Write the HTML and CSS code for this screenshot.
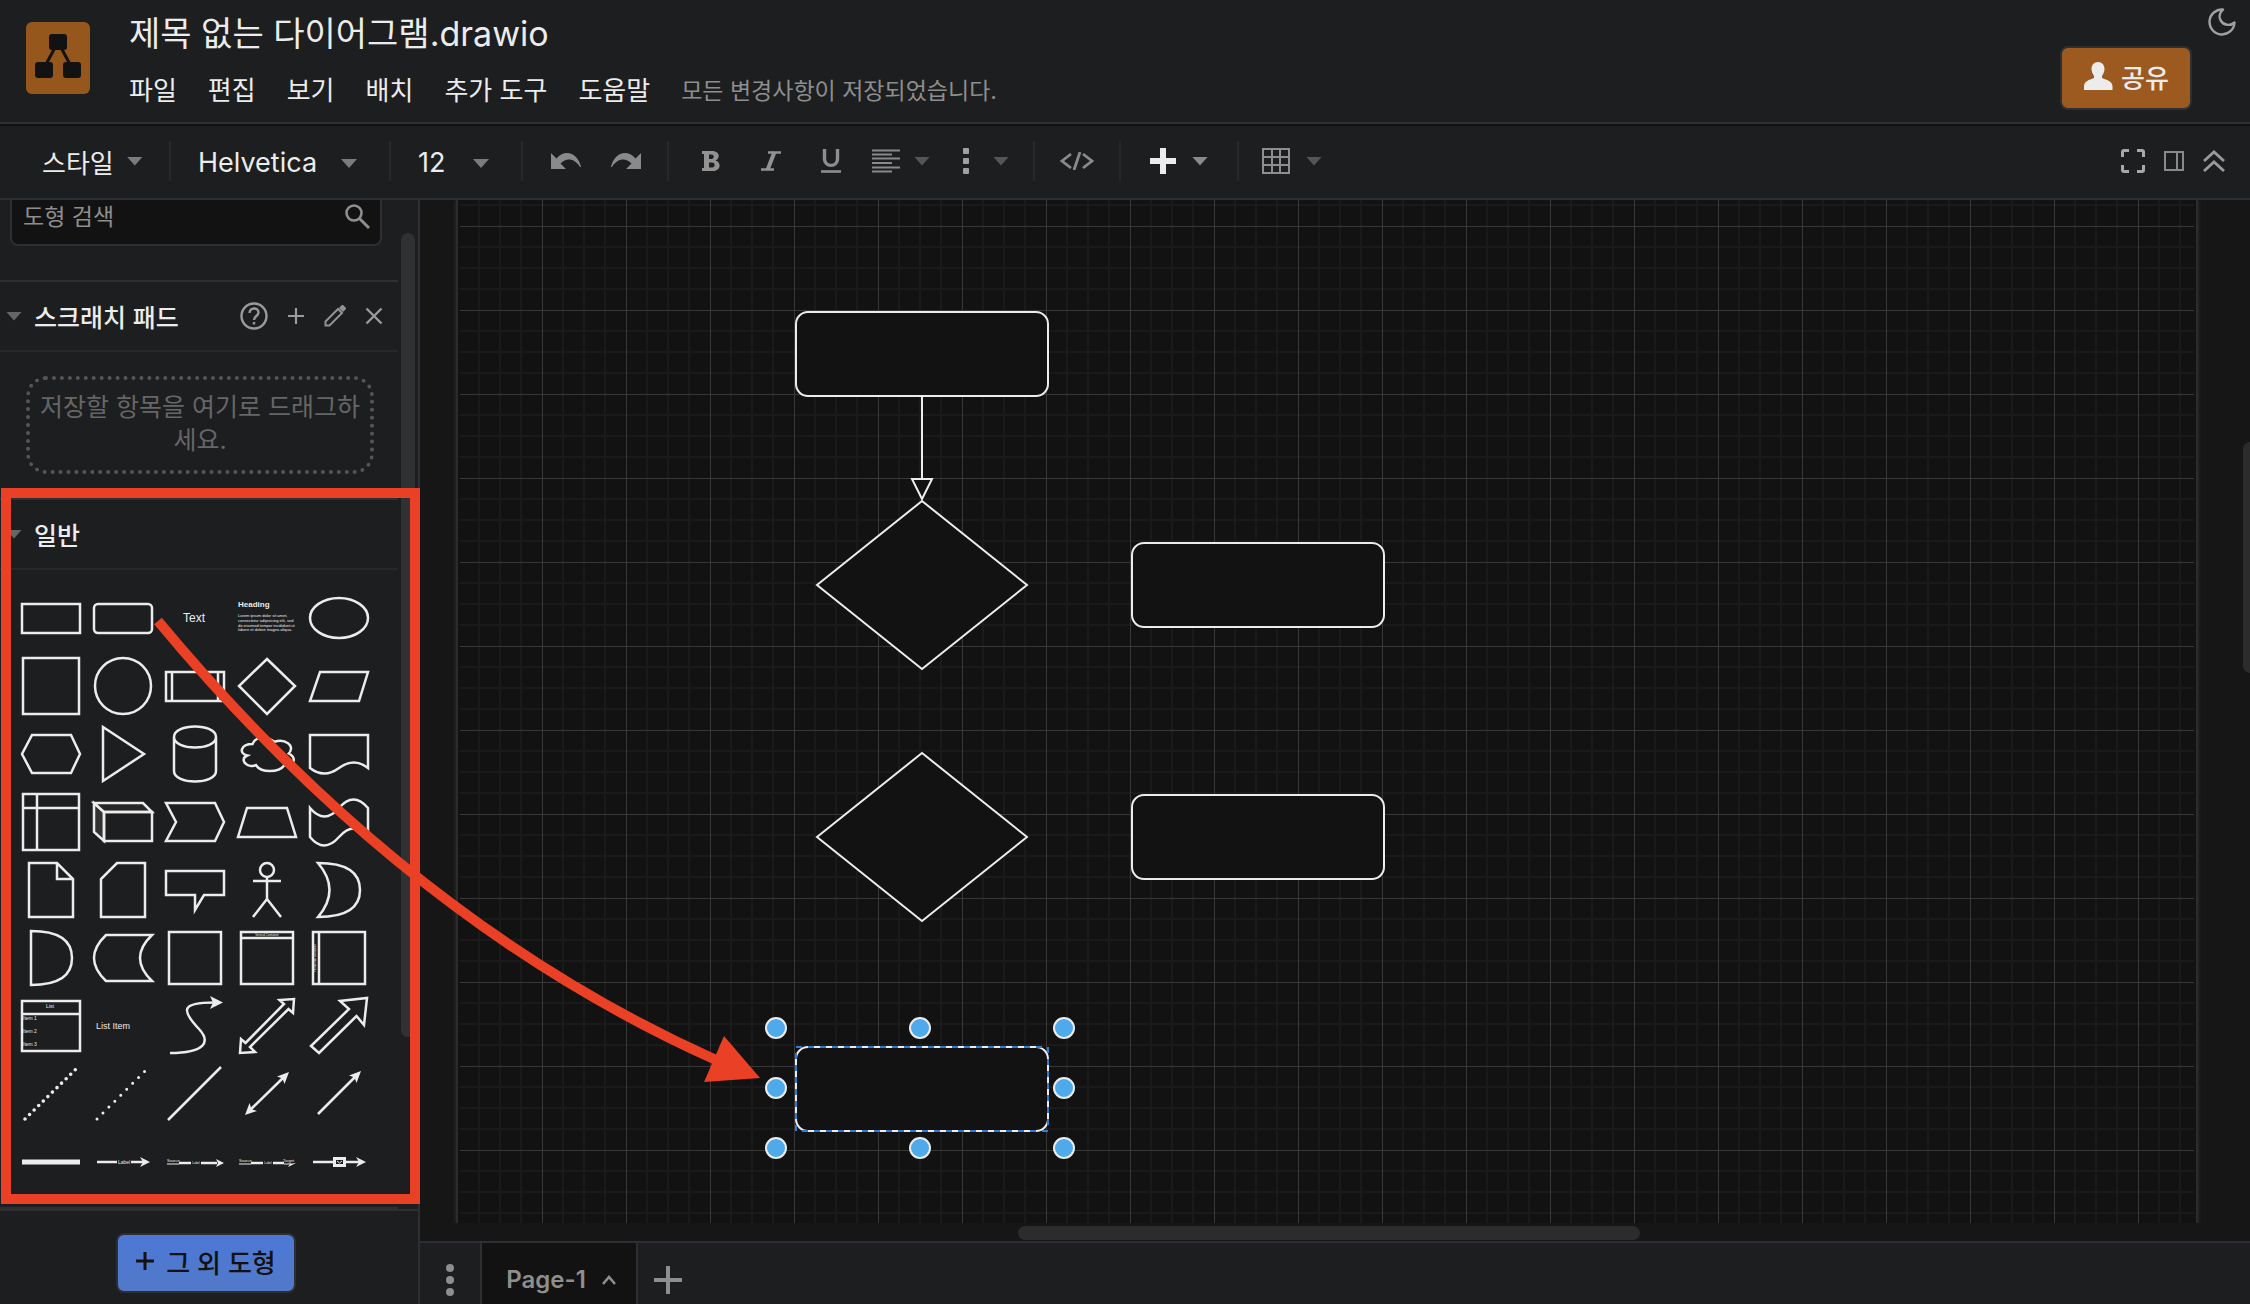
FILE: index.html
```html
<!DOCTYPE html>
<html lang="ko">
<head>
<meta charset="utf-8">
<title>제목 없는 다이어그램.drawio</title>
<link rel="stylesheet" href="styles.css">
</head>
<body>
<div class="app">
  <header class="header">
    <svg class="logo" viewBox="0 0 64 72" aria-hidden="true">
      <rect width="64" height="72" rx="6" fill="#96571d"/>
      <path d="M32 20L18 46M32 20L46 46" stroke="#121212" stroke-width="3"/>
      <rect x="23" y="12" width="18" height="16" rx="3" fill="#121212"/>
      <rect x="9" y="40" width="18" height="16" rx="3" fill="#121212"/>
      <rect x="37" y="40" width="18" height="16" rx="3" fill="#121212"/>
    </svg>
    <div class="heading">
      <h1 class="title">제목 없는 다이어그램.drawio</h1>
      <nav class="menubar">
        <button class="menu">파일</button>
        <button class="menu">편집</button>
        <button class="menu">보기</button>
        <button class="menu">배치</button>
        <button class="menu">추가 도구</button>
        <button class="menu">도움말</button>
        <span class="status">모든 변경사항이 저장되었습니다.</span>
      </nav>
    </div>
    <div class="header-actions">
      <button class="icon-button theme" aria-label="테마">
        <svg width="28" height="28" viewBox="0 0 28 28" fill="none" stroke="#a0a0a3" stroke-width="2.4" stroke-linejoin="round"><path d="M15 1.5A12.5 12.5 0 1 0 26.500 14.500C22 18.500 15.500 17 13 13C10.500 9 11.500 4.500 15 1.500Z"/></svg>
      </button>
      <button class="share">
        <svg width="30" height="30" viewBox="0 0 30 30" aria-hidden="true"><path d="M15 0C19 0 21.500 3 21.500 7C21.500 10 20 12 19 14V16C24 18 29 19 29.500 24V28H1V24C1.500 19 6 18 11 16V14C10 12 8.500 10 8.500 7C8.500 3 11 0 15 0Z" fill="#ececec"/></svg>
        <span>공유</span>
      </button>
    </div>
  </header>

  <div class="toolbar">
    <div class="group style-group"><button class="style-button">스타일 <i class="caret"></i></button></div>
    <div class="group picker font-picker">
      <select aria-label="글꼴"><option>Helvetica</option></select><i class="caret"></i>
    </div>
    <div class="group picker size-picker">
      <select aria-label="글꼴 크기"><option>12</option></select><i class="caret"></i>
    </div>
    <div class="group history">
      <button class="tool" aria-label="실행 취소"><svg width="32" height="22" viewBox="0 0 32 22"><path d="M1 3V19H16L10.500 13.500C17 7 25 9 30 17H31C29 5 16-3 6.500 8.500Z" fill="#8a8a8a"/></svg></button>
      <button class="tool" aria-label="다시 실행"><svg width="32" height="22" viewBox="0 0 32 22"><path d="M31 3V19H16L21.500 13.500C15 7 7 9 2 17H1C3 5 16-3 25.500 8.500Z" fill="#8a8a8a"/></svg></button>
    </div>
    <div class="group format">
      <button class="tool" aria-label="굵게"><svg width="18" height="20" viewBox="0 0 18 20"><path fill="#929292" fill-rule="evenodd" d="M0 0H10C18 0 18.500 7.500 13.500 9.500C20 11.500 18.500 20 11 20H0V17H2V3H0ZM7 3.500V8H9.500C12.500 8 12.500 3.500 9.500 3.500ZM7 11.500V16.500H10C13.500 16.500 13.500 11.500 10 11.500Z"/></svg></button>
      <button class="tool italic" aria-label="기울임"><svg width="20" height="20" viewBox="0 0 20 20" fill="none" stroke="#929292"><path d="M7 1.500H20M0 18.500H13" stroke-width="2.500"/><path d="M13.500 1L6.500 19" stroke-width="4"/></svg></button>
      <button class="tool" aria-label="밑줄"><svg width="20" height="24" viewBox="0 0 20 24" fill="none" stroke="#8e8e8e" stroke-width="3.400"><path d="M3.500 0V10C3.500 18.500 16.500 18.500 16.500 10V0"/><path d="M0 22.500H20" stroke-width="2.600"/></svg></button>
      <button class="tool drop" aria-label="정렬"><svg width="28" height="24" viewBox="0 0 28 24" stroke="#8a8a8a" stroke-width="2.200"><path d="M0 1.500H28M0 5.500H20M0 9.500H28M0 14H20M0 18.500H28M0 22.500H20"/></svg><i class="caret dim"></i></button>
      <button class="tool dots" aria-label="더 보기"><svg width="6" height="28" viewBox="0 0 6 28" fill="#a0a0a0"><rect y="1" width="6" height="6" rx="1"/><rect y="11" width="6" height="6" rx="1"/><rect y="21" width="6" height="6" rx="1"/></svg><i class="caret dim"></i></button>
    </div>
    <div class="group code"><button class="tool" aria-label="HTML"><svg width="34" height="18" viewBox="0 0 34 18" fill="none" stroke="#8a8a8a" stroke-width="2.800"><path d="M11 2L2 9L11 16M23 2L32 9L23 16M20 0L14 18"/></svg></button></div>
    <div class="group insert"><button class="tool plus" aria-label="삽입"><svg width="26" height="26" viewBox="0 0 26 26" stroke="#ececec" stroke-width="6"><path d="M13 0V26M0 13H26"/></svg><i class="caret bright"></i></button></div>
    <div class="group table-group"><button class="tool plus" aria-label="표"><svg width="28" height="28" viewBox="0 0 28 28" fill="none" stroke="#8e8e8e" stroke-width="2"><path d="M1 2H27V26H1ZM1 10H27M1 18H27M10 2V26M18 2V26"/></svg><i class="caret dim"></i></button></div>
    <div class="view-tools">
      <button class="icon-button" aria-label="전체 화면"><svg width="24" height="24" viewBox="0 0 24 24" fill="none" stroke="#a8a8a8" stroke-width="3"><path d="M1.500 8V3Q1.500 1.500 3 1.500H8M16 1.500H21Q22.500 1.500 22.500 3V8M22.500 16V21Q22.500 22.500 21 22.500H16M8 22.500H3Q1.500 22.500 1.500 21V16"/></svg></button>
      <button class="icon-button" aria-label="서식 패널"><svg width="22" height="22" viewBox="0 0 22 22" fill="none" stroke="#8a8a8a" stroke-width="2"><path d="M2 2H20V20H2ZM14 2V20"/></svg></button>
      <button class="icon-button" aria-label="접기"><svg width="22" height="22" viewBox="0 0 22 22" fill="none" stroke="#9a9a9a" stroke-width="2.800"><path d="M1 11L11 2L21 11M1 21L11 12L21 21"/></svg></button>
    </div>
  </div>

  <div class="workspace">
    <aside class="sidebar">
      <div class="palette">
        <div class="palette-body">
          <label class="search">
            <input type="text" placeholder="도형 검색" aria-label="도형 검색">
            <svg width="26" height="26" viewBox="0 0 26 26" fill="none" stroke="#8e8e8e" stroke-width="2.600"><circle cx="10" cy="9" r="7.500"/><path d="M15 14L25 24" stroke-width="3"/></svg>
          </label>
          <section class="section">
            <h2 class="section-title"><i class="caret wide"></i><span>스크래치 패드</span>
              <span class="section-tools">
                <button class="icon-button" aria-label="도움말"><svg width="28" height="28" viewBox="0 0 28 28" fill="none" stroke="#9a9a9a" stroke-width="2.400"><circle cx="14" cy="14" r="12.500"/><path d="M9.500 11C9.500 5 18.500 5 18.500 10.500C18.500 14 14 14 14 18M14 20V22.500"/></svg></button>
                <button class="icon-button" aria-label="추가"><svg width="18" height="18" viewBox="0 0 18 18" stroke="#9a9a9a" stroke-width="2.200"><path d="M9 1V17M1 9H17"/></svg></button>
                <button class="icon-button" aria-label="편집"><svg width="22" height="22" viewBox="0 0 22 22" fill="none" stroke="#929292" stroke-width="2"><path d="M1.500 20.500V16.500L14 4L18 8L5.500 20.500Z"/><path d="M17 3L18.500 1.500L20.500 3.500L19 5Z" fill="#929292" stroke-width="3"/></svg></button>
                <button class="icon-button" aria-label="닫기"><svg width="18" height="18" viewBox="0 0 18 18" stroke="#9a9a9a" stroke-width="2.400"><path d="M1.500 1.500L16.500 16.500M16.500 1.500L1.500 16.500"/></svg></button>
              </span>
            </h2>
            <div class="scratch"><p class="dropzone">저장할 항목을 여기로 드래그하세요.</p></div>
          </section>
          <section class="section">
            <h2 class="section-title"><i class="caret wide"></i><span>일반</span></h2>
            <div class="shapes">
              <button class="shape"><svg viewBox="0 0 72 68"><rect x="7" y="20" width="58" height="29"/></svg></button>
              <button class="shape"><svg viewBox="0 0 72 68"><rect x="7" y="20" width="58" height="29" rx="4"/></svg></button>
              <button class="shape"><svg viewBox="0 0 72 68"><text class="t12" x="35" y="38" text-anchor="middle">Text</text></svg></button>
              <button class="shape"><svg viewBox="0 0 72 68"><text class="t8" x="7" y="23">Heading</text><text class="t4"><tspan x="7" y="33">Lorem ipsum dolor sit amet,</tspan><tspan x="7" y="38">consectetur adipisicing elit, sed</tspan><tspan x="7" y="43">do eiusmod tempor incididunt ut</tspan><tspan x="7" y="47">labore et dolore magna aliqua.</tspan></text></svg></button>
              <button class="shape"><svg viewBox="0 0 72 68"><ellipse cx="36" cy="34" rx="29" ry="20"/></svg></button>

              <button class="shape"><svg viewBox="0 0 72 68"><rect x="8" y="6" width="56" height="56"/></svg></button>
              <button class="shape"><svg viewBox="0 0 72 68"><circle cx="36" cy="34" r="28"/></svg></button>
              <button class="shape"><svg viewBox="0 0 72 68"><path d="M7 20H65V49H7ZM13 20V49M59 20V49"/></svg></button>
              <button class="shape"><svg viewBox="0 0 72 68"><path d="M36 7L64 34L36 62L8 34Z"/></svg></button>
              <button class="shape"><svg viewBox="0 0 72 68"><path d="M17 20H65L56 49H7Z"/></svg></button>

              <button class="shape"><svg viewBox="0 0 72 68"><path d="M17 15H56L65 34L56 53H17L7 34Z"/></svg></button>
              <button class="shape"><svg viewBox="0 0 72 68"><path d="M16 7L57 34L16 61Z"/></svg></button>
              <button class="shape"><svg viewBox="0 0 72 68"><path d="M15 17C15 3 57 3 57 17V51C57 65 15 65 15 51ZM15 17C15 31 57 31 57 17"/></svg></button>
              <button class="shape"><svg viewBox="0 0 72 68"><path d="M21.500 24C10 24 7 33.500 16.300 35.500C7 39.700 17.400 49 25 45.200C30.200 53 47.600 53 53.400 45.200C65 45.200 65 37.400 57.800 33.500C65 25.700 53.400 18 43.300 21.800C36 16 24.400 16 21.500 24Z"/></svg></button>
              <button class="shape"><svg viewBox="0 0 72 68"><path d="M7 15H65V48Q51 37 36 48T7 48Z"/></svg></button>

              <button class="shape"><svg viewBox="0 0 72 68"><path d="M8 6H64V62H8ZM8 20H64M22 6V62"/></svg></button>
              <button class="shape"><svg viewBox="0 0 72 68"><path d="M7 15L17 24V53L7 44Z" fill="#333"/><path d="M7 15H56L65 24H17Z" fill="#262626"/><path d="M17 24H65V53H17Z"/></svg></button>
              <button class="shape"><svg viewBox="0 0 72 68"><path d="M7 15H56L65 34L56 53H7L17 34Z"/></svg></button>
              <button class="shape"><svg viewBox="0 0 72 68"><path d="M16 20H56L65 49H7Z"/></svg></button>
              <button class="shape"><svg viewBox="0 0 72 68"><path d="M7 20Q21.500 37 36 20T65 20V49Q51 32 36 49T7 49Z"/></svg></button>

              <button class="shape"><svg viewBox="0 0 72 68"><path d="M14 7H42L58 23V61H14ZM42 7V23H58"/></svg></button>
              <button class="shape"><svg viewBox="0 0 72 68"><path d="M30 7H58V61H14V23Z"/></svg></button>
              <button class="shape"><svg viewBox="0 0 72 68"><path d="M7 15H65V39H45L36 54V39H7Z"/></svg></button>
              <button class="shape"><svg viewBox="0 0 72 68"><circle cx="36" cy="14" r="7"/><path d="M36 21V43M22 25H50M22 61L36 43L50 61"/></svg></button>
              <button class="shape"><svg viewBox="0 0 72 68"><path d="M15 7Q57 7 57 34T15 61Q38 34 15 7Z"/></svg></button>

              <button class="shape"><svg viewBox="0 0 72 68"><path d="M16 7Q57 7 57 34T16 61Z"/></svg></button>
              <button class="shape"><svg viewBox="0 0 72 68"><path d="M19 11H65Q41 34 65 57H19Q-5 34 19 11Z"/></svg></button>
              <button class="shape"><svg viewBox="0 0 72 68"><rect x="10" y="8" width="52" height="52"/></svg></button>
              <button class="shape"><svg viewBox="0 0 72 68"><path d="M10 8H62V60H10ZM10 14H62"/><text class="t3" x="36" y="12" text-anchor="middle">Vertical Container</text></svg></button>
              <button class="shape"><svg viewBox="0 0 72 68"><path d="M10 8H62V60H10ZM16 8V60"/><text class="t3" transform="translate(13 34) rotate(-90)" text-anchor="middle">Horizontal Container</text></svg></button>

              <button class="shape"><svg viewBox="0 0 72 68"><path d="M7 9H65V59H7ZM7 22H65"/><text class="t5" x="35" y="16" text-anchor="middle">List</text><text class="t5"><tspan x="8" y="28">Item 1</tspan><tspan x="8" y="41">Item 2</tspan><tspan x="8" y="54">Item 3</tspan></text></svg></button>
              <button class="shape"><svg viewBox="0 0 72 68"><text class="t9" x="9" y="37">List Item</text></svg></button>
              <button class="shape"><svg viewBox="0 0 72 68"><path d="M11 61C46 61 52 50 40 37C22 18 22 10.500 55 10.500"/><path class="solid" d="M64 10.500L51 4L54 10.500L51 17Z"/></svg></button>
              <button class="shape"><svg viewBox="0 0 72 68"><path d="M63 7L62 21L57.500 17L19 55L24 60L9 61L10 47L14.500 51L53 12L48.500 8Z"/></svg></button>
              <button class="shape"><svg viewBox="0 0 72 68"><path d="M64 6L61 33L53.500 24L16 61L8 54L46 17L37 9Z"/></svg></button>

              <button class="shape"><svg viewBox="0 0 72 68"><path class="dotted" d="M10 59L61 9" stroke-width="3.600" stroke-dasharray="0 6.400"/></svg></button>
              <button class="shape"><svg viewBox="0 0 72 68"><path class="dotted" d="M10 59L58 11" stroke-width="3" stroke-dasharray="0 8.400"/></svg></button>
              <button class="shape"><svg viewBox="0 0 72 68"><path d="M9 60L62 7" stroke-width="2.500"/></svg></button>
              <button class="shape"><svg viewBox="0 0 72 68"><path d="M18 51L54 16"/><path class="solid" d="M58 12L53.500 24L51.500 18.500L46 16.500ZM14 55L18.500 43L20.500 49L26 51Z"/></svg></button>
              <button class="shape"><svg viewBox="0 0 72 68"><path d="M15 54L54 15"/><path class="solid" d="M58 11L53.500 23L51.500 17.500L46 15.500Z"/></svg></button>

              <button class="shape"><svg viewBox="0 0 72 68"><path class="thick" d="M7 34H65"/></svg></button>
              <button class="shape"><svg viewBox="0 0 72 68"><path d="M10 34H30M44 34H56"/><path class="solid" d="M63 34L53 29L56 34L53 39Z"/><text class="t5" x="37" y="36" text-anchor="middle">Label</text></svg></button>
              <button class="shape"><svg viewBox="0 0 72 68"><path d="M20 35H32M42 35H58"/><path class="thin" d="M8 36H20"/><path class="solid" d="M65 35L57 31L59 35L57 39Z"/><text class="t4" x="8" y="34">Source</text><text class="t3" x="37" y="36" text-anchor="middle">Label</text></svg></button>
              <button class="shape"><svg viewBox="0 0 72 68"><path d="M20 35H32M42 35H53"/><path class="thin" d="M8 36H20M53 36H60"/><path class="solid" d="M65 35L57 36L59 36L57 39Z"/><text class="t4" x="8" y="34">Source</text><text class="t3" x="37" y="36" text-anchor="middle">Label</text><text class="t4" x="52" y="34">Target</text></svg></button>
              <button class="shape"><svg viewBox="0 0 72 68"><path d="M10 34H30M43 34H56"/><path class="solid" d="M63 34L53 29L56 34L53 39Z"/><rect class="bold" x="31.500" y="30.500" width="10" height="7"/><path class="thin" d="M34 33L36.500 35L39 33"/></svg></button>
            </div>
          </section>
        </div>
        <div class="scroll-y"></div>
      </div>
      <div class="sidebar-footer">
        <button class="more-shapes"><svg width="18" height="18" viewBox="0 0 18 18" stroke="#121212" stroke-width="3"><path d="M9 0V18M0 9H18"/></svg><span>그 외 도형</span></button>
      </div>
    </aside>

    <main class="editor">
      <div class="canvas">
        <div class="page"><div class="grid"></div></div>
        <svg class="diagram" aria-label="다이어그램">
          <g fill="#121212" stroke="#ececec" stroke-width="2">
            <rect x="376" y="112" width="252" height="84" rx="12"/>
            <path d="M502 196V279"/>
            <path d="M492 279H512L502 299Z"/>
            <path d="M502 301L607 385L502 469L397 385Z"/>
            <rect x="712" y="343" width="252" height="84" rx="12"/>
            <path d="M502 553L607 637L502 721L397 637Z"/>
            <rect x="712" y="595" width="252" height="84" rx="12"/>
            <rect x="376" y="847" width="252" height="84" rx="12"/>
          </g>
          <rect x="376" y="847" width="252" height="84" fill="none" stroke="#2f7dd0" stroke-width="2" stroke-dasharray="6 6"/>
          <g fill="#4faaec" stroke="#ececec" stroke-width="2">
            <circle cx="356" cy="828" r="10"/><circle cx="500" cy="828" r="10"/><circle cx="644" cy="828" r="10"/>
            <circle cx="356" cy="888" r="10"/><circle cx="644" cy="888" r="10"/>
            <circle cx="356" cy="948" r="10"/><circle cx="500" cy="948" r="10"/><circle cx="644" cy="948" r="10"/>
          </g>
        </svg>
        <div class="scroll-right"></div>
      </div>
      <div class="scroll-row"><div class="scroll-x"></div></div>
      <footer class="tabs">
        <button class="tab-menu" aria-label="페이지"><svg width="8" height="32" viewBox="0 0 8 32" fill="#8e8e8e"><circle cx="4" cy="4" r="4"/><circle cx="4" cy="16" r="4"/><circle cx="4" cy="28" r="4"/></svg></button>
        <button class="tab"><span>Page-1</span><svg width="14" height="10" viewBox="0 0 14 10" fill="none" stroke="#8e8e8e" stroke-width="2.600"><path d="M1 9L7 2L13 9"/></svg></button>
        <button class="tab-add" aria-label="페이지 추가"><svg width="28" height="28" viewBox="0 0 28 28" stroke="#8e8e8e" stroke-width="4"><path d="M14 0V28M0 14H28"/></svg></button>
      </footer>
    </main>
  </div>

  <svg class="annotation" aria-hidden="true">
    <rect x="6" y="493" width="409" height="706" fill="none" stroke="#ea4025" stroke-width="10"/>
    <path d="M158 621Q408 922 716 1060" fill="none" stroke="#ea4025" stroke-width="10"/>
    <path d="M724 1036L760 1078L704 1082Z" fill="#ea4025"/>
  </svg>
</div>
</body>
</html>
```
FILE: styles.css
```css
* { box-sizing: border-box; }

body {
  margin: 0;
  background: #1d1e20;
  color: #ececec;
  font-family: Inter, "Noto Sans CJK KR", sans-serif;
  font-size: 26px;
}

button {
  padding: 0;
  border: 0;
  background: none;
  color: inherit;
  font: inherit;
  white-space: nowrap;
}

svg { display: block; flex: none; }
h1, h2, p { margin: 0; font-weight: 400; }

.app {
  position: relative;
  display: flex;
  flex-direction: column;
  min-height: 100vh;
}

.annotation {
  position: absolute;
  inset: 0;
  width: 100%;
  height: 100%;
  pointer-events: none;
}

.caret {
  flex: none;
  width: 16px;
  height: 9px;
  background: #7c7c7c;
  clip-path: polygon(0 0, 100% 0, 50% 100%);
}
.caret.dim { background: #555; }
.caret.bright { background: #8a8a8a; }
.caret.wide { background: #666; }

/* header */
.header {
  display: flex;
  height: 126px;
  padding-left: 26px;
  border-bottom: 2px solid #121212;
  box-shadow: inset 0 -2px #2e2f32;
}
.logo { width: 64px; height: 72px; margin-top: 22px; }
.heading { flex: 1; margin-left: 39px; padding-top: 10px; }
.title { font-size: 34px; line-height: 48px; }
.menubar {
  display: flex;
  align-items: center;
  gap: 31px;
  height: 48px;
  margin-top: 9px;
  line-height: 48px;
}
.status { color: #8e8e8e; font-size: 23px; }
.header-actions {
  display: flex;
  flex-direction: column;
  align-items: flex-end;
  padding: 8px 14px 0 0;
}
.share {
  display: flex;
  align-items: center;
  justify-content: center;
  gap: 8px;
  width: 132px;
  height: 64px;
  margin: 10px 44px 0 0;
  padding-bottom: 3px;
  border: 2px solid #2e2f32;
  border-radius: 8px;
  background: #9c5a20;
  font-weight: 500;
}

/* toolbar */
.toolbar {
  display: flex;
  align-items: center;
  height: 74px;
  padding-bottom: 2px;
  border-bottom: 2px solid #2e2f34;
}
.group {
  display: flex;
  align-items: center;
  height: 40px;
  border-right: 2px solid #27282a;
}
.style-group { width: 171px; padding-left: 42px; }
.style-button { display: flex; align-items: center; gap: 13px; }
.picker { position: relative; }
.picker select {
  width: 100%;
  padding: 2px 0 0 27px;
  border: 0;
  appearance: none;
  background: none;
  color: inherit;
  font: inherit;
  font-size: 27px;
}
.picker .caret { position: absolute; right: 32px; top: 18px; }
.font-picker { width: 220px; }
.size-picker { width: 132px; }
.history { width: 146px; padding-left: 13px; }
.tool {
  display: flex;
  align-items: center;
  justify-content: center;
  width: 60px;
  height: 40px;
}
.format { width: 366px; padding-left: 12px; }
.tool.drop { width: 80px; gap: 14px; }
.tool.dots { width: 90px; gap: 24px; }
.code { width: 86px; justify-content: center; }
.insert { width: 118px; justify-content: center; }
.tool.plus { gap: 16px; }
.table-group { width: 106px; justify-content: center; border: 0; }
.view-tools {
  display: flex;
  align-items: center;
  gap: 18px;
  margin-left: auto;
  padding-right: 25px;
}

/* sidebar */
.workspace { display: flex; flex: 1; }
.sidebar {
  display: flex;
  flex: none;
  flex-direction: column;
  width: 420px;
  border-right: 2px solid #2e2f32;
}
.palette { display: flex; flex: 1; }
.palette-body { width: 398px; }
.search {
  display: flex;
  align-items: center;
  height: 46px;
  margin: 0 16px 34px 10px;
  padding: 0 10px 10px 11px;
  border: 2px solid #2e2f32;
  border-top: 0;
  border-radius: 0 0 8px 8px;
  background: #121212;
}
.search input {
  flex: 1;
  min-width: 0;
  padding: 0;
  border: 0;
  background: none;
  color: #ececec;
  font: inherit;
  font-size: 23px;
}
.search input::placeholder { color: #8e8e8e; opacity: 1; }
.section-title {
  display: flex;
  align-items: center;
  gap: 12px;
  height: 72px;
  padding: 0 15px 0 6px;
  border-top: 2px solid #2e2f32;
  border-bottom: 2px solid #27282a;
  font-size: 25px;
  font-weight: 500;
}
.section-tools {
  display: flex;
  align-items: center;
  gap: 19px;
  margin-left: auto;
}
.scratch { height: 146px; padding: 24px 24px 0 26px; }
.dropzone {
  height: 98px;
  padding: 11px 4px;
  border: 4px dotted #555;
  border-radius: 20px;
  color: #666;
  font-size: 25px;
  line-height: 33px;
  text-align: center;
  word-break: break-all;
}
.shapes {
  display: grid;
  grid-template-columns: repeat(5, 72px);
  grid-auto-rows: 68px;
  padding: 14px 0 11px 15px;
  border-bottom: 2px solid #2e2f32;
}
.shape svg {
  width: 72px;
  height: 68px;
  fill: none;
  stroke: #ececec;
  stroke-width: 2.5;
}
.shape text {
  fill: #ececec;
  stroke: none;
  font-family: "Liberation Sans", sans-serif;
}
.shape .solid { fill: #ececec; stroke: none; }
.shape .dotted { stroke-linecap: round; }
.shape .thick { stroke-width: 5px; }
.shape .bold { stroke-width: 3px; }
.shape .thin { stroke-width: 1px; }
.t12 { font-size: 12px; }
.t9 { font-size: 9px; }
.t8 { font-size: 8px; font-weight: 700; }
.t5 { font-size: 5px; }
.t4 { font-size: 4px; }
.t3 { font-size: 3px; }
.scroll-y {
  width: 14px;
  height: 804px;
  margin: 33px 0 0 3px;
  border-radius: 7px;
  background: #303133;
}
.sidebar-footer {
  display: flex;
  justify-content: center;
  height: 96px;
  padding: 22px 6px 0 0;
  border-top: 2px solid #2e2f32;
}
.more-shapes {
  display: flex;
  align-items: center;
  justify-content: center;
  gap: 12px;
  width: 180px;
  height: 60px;
  padding-bottom: 4px;
  border: 2px solid #2e2f32;
  border-radius: 8px;
  background: linear-gradient(#4c78d6, #5279c8);
  color: #121212;
  font-weight: 500;
}

/* canvas */
.editor { display: flex; flex: 1; flex-direction: column; min-width: 0; }
.canvas {
  position: relative;
  display: flex;
  flex: 1;
  overflow: hidden;
  background: #161616;
}
.page {
  flex: 1;
  margin: 0 52px 0 36px;
  padding: 0 2px;
  border: solid #2c2c2c;
  border-width: 0 2px;
  background: #121212;
  box-shadow: 0 0 4px #333;
}
.grid {
  height: 100%;
  --major: #383838;
  --minor: #1a1a1a;
  background:
    linear-gradient(90deg, var(--major) 1px, transparent 1px) -2px 0 / 84px 84px,
    linear-gradient(var(--major) 1px, transparent 1px) 0 26px / 84px 84px,
    linear-gradient(90deg, transparent 20px, var(--minor) 20px 22px, transparent 22px 41px, var(--minor) 41px 43px, transparent 43px 62px, var(--minor) 62px 64px, transparent 64px) -2px 0 / 84px 84px,
    linear-gradient(transparent 20px, var(--minor) 20px 22px, transparent 22px 41px, var(--minor) 41px 43px, transparent 43px 62px, var(--minor) 62px 64px, transparent 64px) 0 26px / 84px 84px;
}
.diagram { position: absolute; inset: 0; width: 100%; height: 100%; }
.scroll-right {
  position: absolute;
  top: 242px;
  right: -7px;
  width: 14px;
  height: 231px;
  border-radius: 7px;
  background: #2c2c2c;
}
.scroll-row { height: 18px; padding-top: 3px; background: #161616; }
.scroll-x {
  width: 34%;
  height: 14px;
  margin-left: 598px;
  border-radius: 7px;
  background: #2c2c2c;
}
.tabs {
  display: flex;
  height: 64px;
  border-top: 2px solid #2e2f34;
  color: #8e8e8e;
}
.tabs button { display: flex; align-items: center; justify-content: center; padding-top: 11px; }
.tabs .tab-menu { width: 60px; }
.tabs .tab {
  gap: 16px;
  width: 158px;
  padding-left: 4px;
  border: solid #2e2f32;
  border-width: 0 2px;
  background: #121212;
  font-size: 24px;
  font-weight: 600;
}
.tabs .tab-add { width: 60px; }
```
